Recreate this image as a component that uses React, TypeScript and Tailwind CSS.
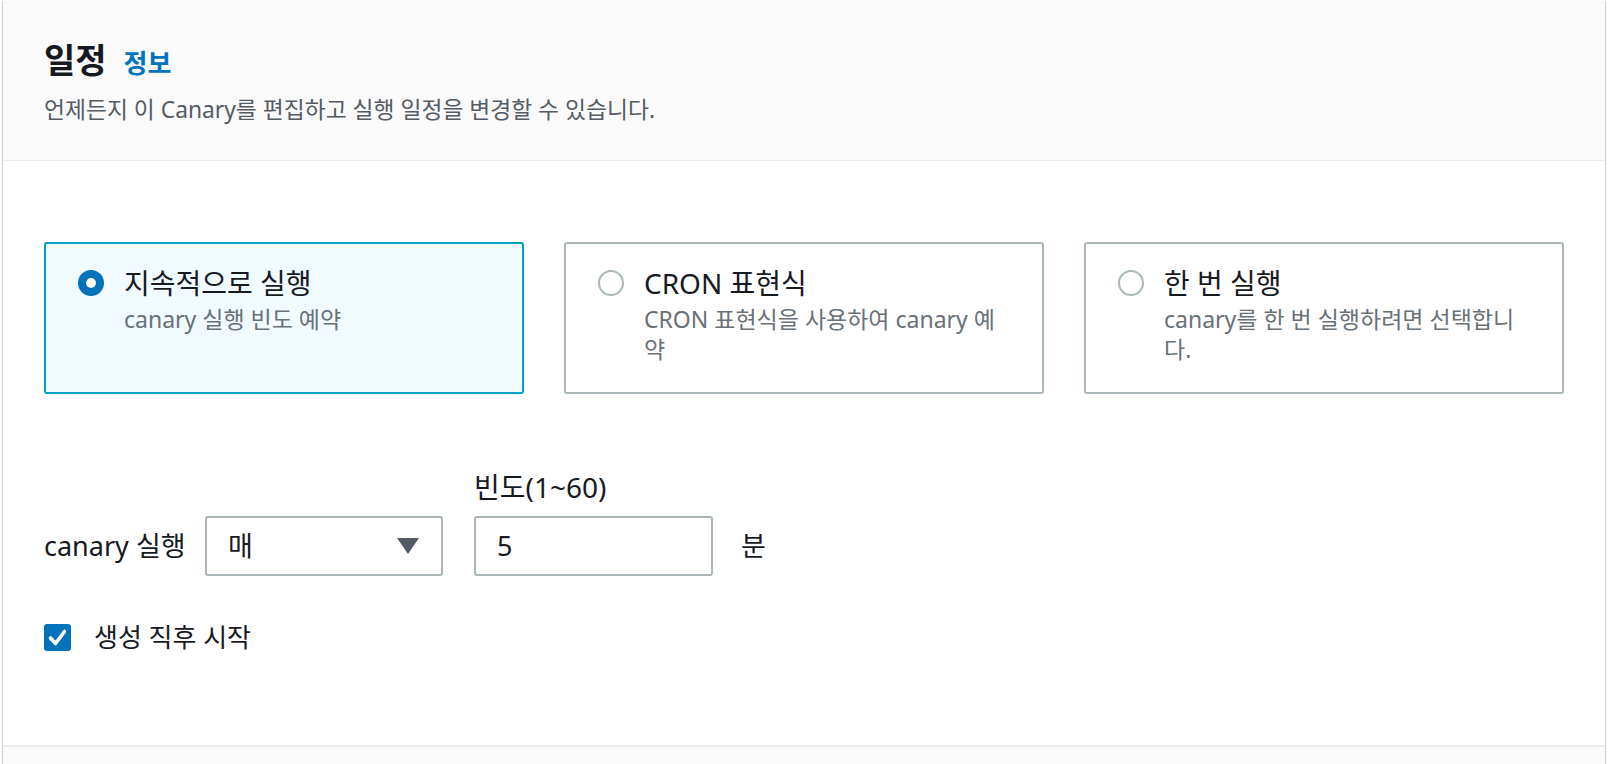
import React from "react";

function Radio({ checked }: { checked: boolean }) {
  return checked ? (
    <span className="block w-[26px] h-[26px] rounded-full border-[8px] border-[#0073bb] bg-white" />
  ) : (
    <span className="block w-[26px] h-[26px] rounded-full border-2 border-[#aab7b8] bg-white" />
  );
}

function Tile({
  checked,
  title,
  desc,
}: {
  checked: boolean;
  title: string;
  desc: string;
}) {
  return (
    <div
      className={
        checked
          ? "h-[152px] rounded-[3px] border-2 border-[#00a1c9] bg-[#f1faff] pt-[22px] pl-[32px] pr-[32px] flex gap-[20px]"
          : "h-[152px] rounded-[3px] border-2 border-[#aab7b8] bg-white pt-[22px] pl-[32px] pr-[32px] flex gap-[20px]"
      }
    >
      <div className="h-[34px] flex items-center shrink-0">
        <Radio checked={checked} />
      </div>
      <div className="min-w-0">
        <div className="text-[28px] leading-[34px] text-[#16191f]">{title}</div>
        <div className="mt-[4px] text-[23px] leading-[30px] text-[#687078]">{desc}</div>
      </div>
    </div>
  );
}

export default function App() {
  return (
    <div className="w-[1610px] h-[764px] overflow-hidden bg-white font-['Noto_Sans','Noto_Sans_CJK_KR',sans-serif]">
      <div className="ml-[3px] w-[1602px] h-[764px] flex flex-col shadow-[0_1px_1px_0_rgba(0,28,36,0.3),1px_1px_1px_0_rgba(0,28,36,0.15),-1px_1px_1px_0_rgba(0,28,36,0.15)]">
        <div className="h-[161px] shrink-0 bg-[#fafafa] border-b border-[#eaeded] px-[41px] pt-[42px]">
          <div className="flex items-baseline gap-[17px]">
            <h2 className="text-[34px] leading-[36px] font-bold text-[#16191f]">일정</h2>
            <span className="text-[26px] leading-[36px] font-bold text-[#0073bb]">정보</span>
          </div>
          <p className="mt-[14px] text-[22.8px] leading-[30px] text-[#545b64]">
            언제든지 이 Canary를 편집하고 실행 일정을 변경할 수 있습니다.
          </p>
        </div>

        <div className="h-[584px] shrink-0 bg-white px-[41px] pt-[81px]">
          <div className="grid grid-cols-3 gap-[40px]">
            <Tile checked title="지속적으로 실행" desc="canary 실행 빈도 예약" />
            <Tile checked={false} title="CRON 표현식" desc="CRON 표현식을 사용하여 canary 예약" />
            <Tile checked={false} title="한 번 실행" desc="canary를 한 번 실행하려면 선택합니다." />
          </div>

          <div className="mt-[76px] flex items-end">
            <div className="w-[161px] h-[60px] flex items-center text-[27px] text-[#16191f]">
              canary 실행
            </div>
            <div className="w-[238px] h-[60px] rounded-[3px] border-2 border-[#aab7b8] bg-white flex items-center justify-between pl-[21px] pr-[22px]">
              <span className="text-[27px] text-[#16191f]">매</span>
              <svg width="22" height="16" viewBox="0 0 22 16">
                <polygon points="0,0 22,0 11,16" fill="#545b64" />
              </svg>
            </div>
            <div className="ml-[31px] flex flex-col">
              <div className="text-[28px] leading-[34px] text-[#16191f] mb-[12px]">빈도(1~60)</div>
              <div className="w-[239px] h-[60px] rounded-[3px] border-2 border-[#aab7b8] bg-white flex items-center pl-[21px] text-[27px] text-[#16191f]">
                5
              </div>
            </div>
            <div className="ml-[28px] h-[60px] flex items-center text-[27px] text-[#16191f]">분</div>
          </div>

          <div className="mt-[44px] h-[34px] flex items-center gap-[23px]">
            <svg width="27" height="27" viewBox="0 0 27 27" className="shrink-0">
              <rect x="0" y="0" width="27" height="27" rx="3" fill="#0073bb" />
              <path
                d="M6.5 14 L11.5 19.5 L20.5 7.5"
                fill="none"
                stroke="#ffffff"
                strokeWidth="3.6"
                strokeLinecap="round"
                strokeLinejoin="round"
              />
            </svg>
            <span className="text-[26px] leading-[34px] text-[#16191f]">생성 직후 시작</span>
          </div>
        </div>

        <div className="flex-1 bg-[#fafafa] border-t-2 border-[#eaeded]" />
      </div>
    </div>
  );
}
